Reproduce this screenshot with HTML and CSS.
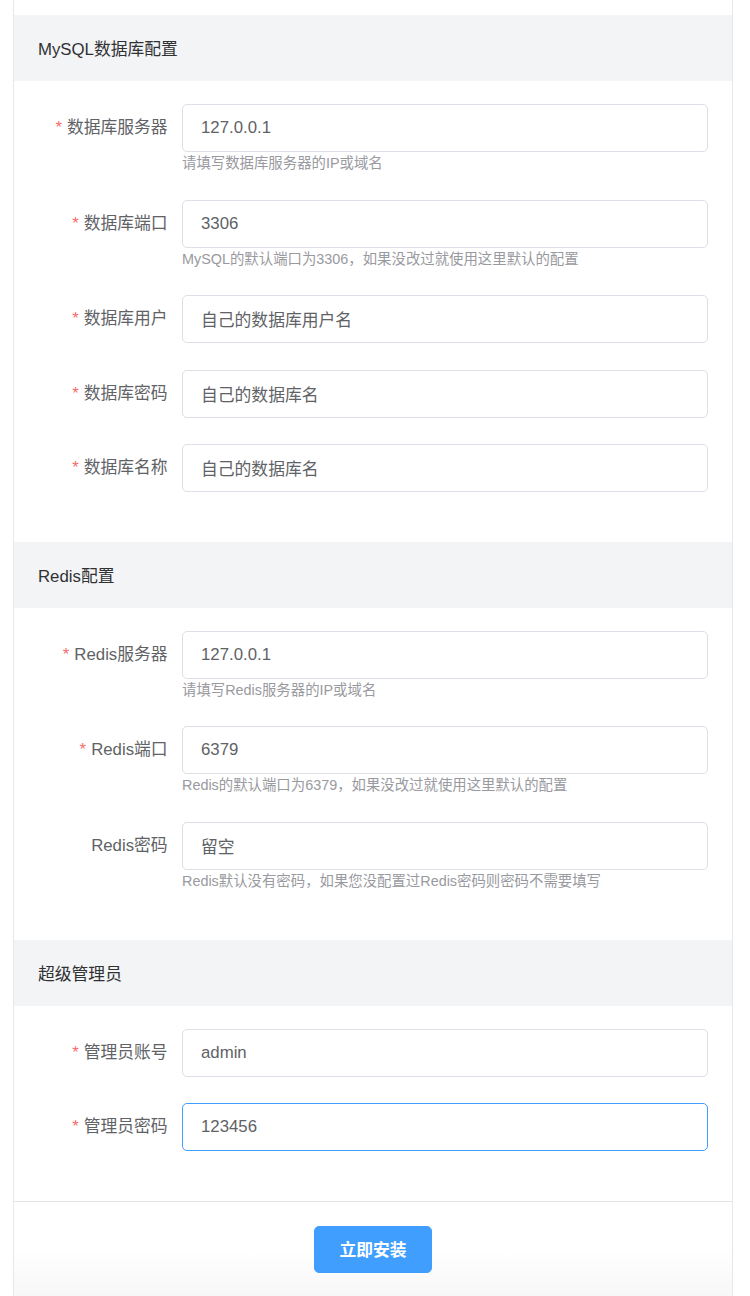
FILE: index.html
```html
<!DOCTYPE html>
<html lang="zh-CN">
<head>
<meta charset="utf-8">
<title>安装</title>
<link rel="stylesheet" href="styles.css">
</head>
<body>
<div class="card">
  <div class="top-space"></div>

  <section class="group">
    <div class="group-title">MySQL数据库配置</div>
    <div class="group-body">
      <div class="form-item">
        <label class="form-label"><span class="star">*</span>数据库服务器</label>
        <div class="form-content">
          <input class="input" type="text" value="127.0.0.1">
          <div class="help">请填写数据库服务器的IP或域名</div>
        </div>
      </div>
      <div class="form-item">
        <label class="form-label"><span class="star">*</span>数据库端口</label>
        <div class="form-content">
          <input class="input" type="text" value="3306">
          <div class="help">MySQL的默认端口为3306，如果没改过就使用这里默认的配置</div>
        </div>
      </div>
      <div class="form-item">
        <label class="form-label"><span class="star">*</span>数据库用户</label>
        <div class="form-content">
          <input class="input" type="text" value="自己的数据库用户名">
        </div>
      </div>
      <div class="form-item">
        <label class="form-label"><span class="star">*</span>数据库密码</label>
        <div class="form-content">
          <input class="input" type="text" value="自己的数据库名">
        </div>
      </div>
      <div class="form-item">
        <label class="form-label"><span class="star">*</span>数据库名称</label>
        <div class="form-content">
          <input class="input" type="text" value="自己的数据库名">
        </div>
      </div>
    </div>
  </section>

  <section class="group">
    <div class="group-title">Redis配置</div>
    <div class="group-body">
      <div class="form-item">
        <label class="form-label"><span class="star">*</span>Redis服务器</label>
        <div class="form-content">
          <input class="input" type="text" value="127.0.0.1">
          <div class="help">请填写Redis服务器的IP或域名</div>
        </div>
      </div>
      <div class="form-item">
        <label class="form-label"><span class="star">*</span>Redis端口</label>
        <div class="form-content">
          <input class="input" type="text" value="6379">
          <div class="help">Redis的默认端口为6379，如果没改过就使用这里默认的配置</div>
        </div>
      </div>
      <div class="form-item">
        <label class="form-label">Redis密码</label>
        <div class="form-content">
          <input class="input" type="text" value="留空">
          <div class="help">Redis默认没有密码，如果您没配置过Redis密码则密码不需要填写</div>
        </div>
      </div>
    </div>
  </section>

  <section class="group">
    <div class="group-title">超级管理员</div>
    <div class="group-body">
      <div class="form-item">
        <label class="form-label"><span class="star">*</span>管理员账号</label>
        <div class="form-content">
          <input class="input" type="text" value="admin">
        </div>
      </div>
      <div class="form-item">
        <label class="form-label"><span class="star">*</span>管理员密码</label>
        <div class="form-content">
          <input class="input is-focus" type="text" value="123456">
        </div>
      </div>
    </div>
  </section>

  <div class="footer">
    <button class="btn-primary" type="button">立即安装</button>
  </div>
</div>
</body>
</html>
```

FILE: styles.css
```css
* {
  box-sizing: border-box;
}

html, body {
  margin: 0;
  padding: 0;
  background: #ffffff;
}

body {
  font-family: "Liberation Sans", "Noto Sans CJK SC", sans-serif;
  color: #606266;
}

.card {
  margin-left: 13px;
  width: 720px;
  border-left: 1px solid #e4e7ed;
  border-right: 1px solid #e4e7ed;
  background: #ffffff;
}

.top-space {
  height: 15px;
}

.group-title {
  height: 66.4px;
  background: #f3f4f6;
  padding-left: 24px;
  display: flex;
  align-items: center;
  font-size: 16.8px;
  color: #303133;
}

.group-body {
  padding: 22.6px 24px 22.6px 0;
}

.form-item {
  display: flex;
  align-items: flex-start;
  margin-bottom: 26.6px;
}

.form-label {
  width: 168px;
  flex: none;
  padding-right: 14.4px;
  text-align: right;
  line-height: 48px;
  height: 48px;
  font-size: 16.8px;
  color: #606266;
  white-space: nowrap;
}

.star {
  color: #f56c6c;
  margin-right: 5px;
  font-size: 16.8px;
}

.form-content {
  flex: 1;
  min-width: 0;
}

.input {
  display: block;
  width: 100%;
  height: 48px;
  border: 1px solid #dcdfe6;
  border-radius: 5px;
  padding: 0 18px;
  font-family: "Liberation Sans", "Noto Sans CJK SC", sans-serif;
  font-size: 16.8px;
  color: #606266;
  background: #ffffff;
  outline: none;
}

.input.is-focus {
  border-color: #409eff;
}

.help {
  font-size: 14.4px;
  line-height: 21px;
  height: 21px;
  padding-top: 1px;
  color: #999aa0;
  white-space: nowrap;
}

.footer {
  border-top: 1px solid #e4e4e4;
  padding: 24px 0 24px;
  display: flex;
  justify-content: center;
  background: linear-gradient(#ffffff 0%, #ffffff 50%, #f7f7f7 100%);
}

.btn-primary {
  width: 118px;
  height: 47px;
  border: 1px solid #409eff;
  border-radius: 5px;
  background: #409eff;
  color: #ffffff;
  font-family: "Liberation Sans", "Noto Sans CJK SC", sans-serif;
  font-size: 16.8px;
  font-weight: 700;
  cursor: pointer;
}
```
